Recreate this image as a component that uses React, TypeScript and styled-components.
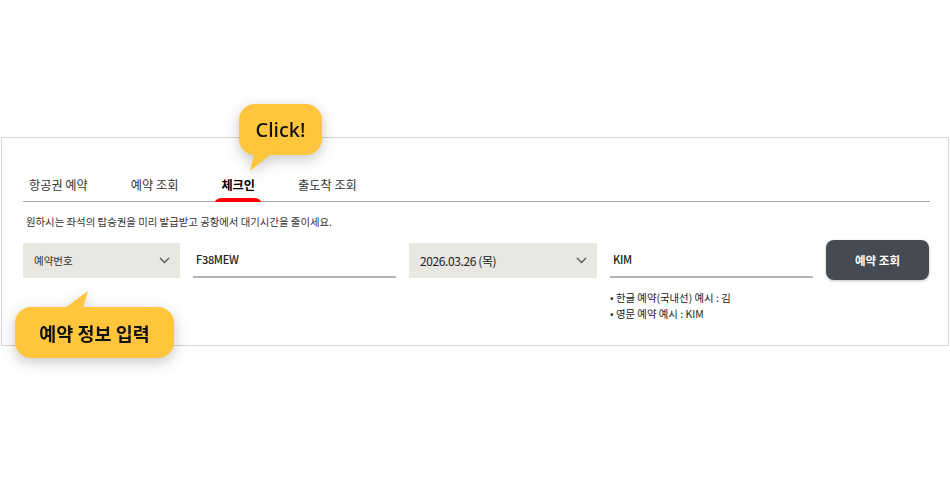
import React from 'react'
import styled, { createGlobalStyle } from 'styled-components'

const GlobalStyle = createGlobalStyle`
  html, body {
    margin: 0;
    padding: 0;
    background: #fff;
  }
  body {
    font-family: "Noto Sans CJK KR", "Noto Sans", sans-serif;
    color: #222;
  }
`

const tabs = ['항공권 예약', '예약 조회', '체크인', '출도착 조회']

const ChevronDown = () => (
  <svg width="11" height="7" viewBox="0 0 11 7" fill="none">
    <path d="M1 1l4.5 4.5L10 1" stroke="#555" strokeWidth="1.3" />
  </svg>
)

const App = () => {
  return (
    <Page>
      <GlobalStyle />
      <Panel>
        <TabBar>
          {tabs.map((t) => (
            <Tab key={t} active={t === '체크인'}>
              {t}
            </Tab>
          ))}
        </TabBar>
        <Desc>원하시는 좌석의 탑승권을 미리 발급받고 공항에서 대기시간을 줄이세요.</Desc>
        <FormGrid>
          <Select>
            <span>예약번호</span>
            <ChevronDown />
          </Select>
          <Field>F38MEW</Field>
          <Select>
            <DateText>2026.03.26 (목)</DateText>
            <ChevronDown />
          </Select>
          <Field>KIM</Field>
          <SearchButton>예약 조회</SearchButton>
          <Hints>
            <li>한글 예약(국내선) 예시 : 김</li>
            <li>영문 예약 예시 : KIM</li>
          </Hints>
        </FormGrid>
      </Panel>

      <Bubble left={239} top={104} width={83} tail="16px 46px, 37px 46px, 11px 67px">
        <BubbleText>Click!</BubbleText>
      </Bubble>
      <Bubble left={15} top={307} width={159} tail="50px 17px, 68px 17px, 73px 0px" tailTop>
        <BubbleText bold>예약 정보 입력</BubbleText>
      </Bubble>
    </Page>
  )
}

export default App

const Page = styled.div`
  position: relative;
  width: 950px;
  height: 483px;
  padding-top: 137px;
  box-sizing: border-box;
`

const Panel = styled.div`
  margin-left: 1px;
  width: 948px;
  height: 209px;
  box-sizing: border-box;
  border: 1px solid #d6d6d6;
  padding: 0 18px 0 21px;
`

const TabBar = styled.div`
  display: flex;
  gap: 31px;
  margin-top: 39px;
  border-bottom: 1px solid #a8a8a8;
`

const Tab = styled.div<{ active?: boolean }>`
  position: relative;
  padding: 0 6px 8px;
  line-height: 16px;
  font-size: 12.2px;
  font-weight: ${(p) => (p.active ? 700 : 400)};
  color: ${(p) => (p.active ? '#000' : '#333')};
  &::after {
    content: '';
    display: ${(p) => (p.active ? 'block' : 'none')};
    position: absolute;
    left: 0;
    right: 0;
    bottom: -1px;
    height: 4px;
    background: #f00;
    border-radius: 7px 7px 0 0 / 4px 4px 0 0;
  }
`

const Desc = styled.p`
  margin: 12px 0 0 3px;
  font-size: 10.4px;
  line-height: 16px;
  color: #333;
`

const FormGrid = styled.div`
  display: grid;
  grid-template-columns: 157px 203px 188px 203px 103px;
  column-gap: 13px;
  align-items: center;
  margin-top: 10px;
`

const Select = styled.div`
  height: 35px;
  background: #e8e7e2;
  display: flex;
  align-items: center;
  justify-content: space-between;
  padding: 0 10px 0 11px;
  font-size: 10.5px;
  color: #333;
`

const DateText = styled.span`
  font-size: 12px;
  color: #222;
  letter-spacing: -0.4px;
`

const Field = styled.div`
  height: 35px;
  box-sizing: border-box;
  border-bottom: 2px solid #b4b4b4;
  display: flex;
  align-items: center;
  padding: 0 3px;
  font-size: 11px;
  font-weight: 500;
  letter-spacing: -0.3px;
  color: #222;
`

const SearchButton = styled.button`
  height: 40px;
  border: 0;
  border-radius: 8px;
  background: #454a53;
  color: #fff;
  font-family: "Noto Sans CJK KR", sans-serif;
  font-size: 11.5px;
  font-weight: 700;
  box-shadow: 0 1px 3px rgba(0, 0, 0, 0.25);
`

const Hints = styled.ul`
  grid-column: 4;
  margin: 10px 0 0;
  padding: 0;
  list-style: none;
  font-size: 10.4px;
  line-height: 16px;
  color: #222;
  li::before {
    content: '• ';
  }
`

const Bubble = styled.div<{ left: number; top: number; width: number; tail: string; tailTop?: boolean }>`
  position: absolute;
  left: ${(p) => p.left}px;
  top: ${(p) => p.top}px;
  width: ${(p) => p.width}px;
  height: 51px;
  filter: drop-shadow(0 4px 7px rgba(0, 0, 0, 0.22));
  &::before {
    content: '';
    position: absolute;
    inset: 0;
    background: #ffc53d;
    border-radius: 16px;
  }
  &::after {
    content: '';
    position: absolute;
    left: 0;
    top: ${(p) => (p.tailTop ? '-16px' : '0')};
    width: 100px;
    height: 70px;
    background: #ffc53d;
    clip-path: polygon(${(p) => p.tail});
  }
`

const BubbleText = styled.div<{ bold?: boolean }>`
  position: relative;
  z-index: 1;
  height: 100%;
  display: flex;
  align-items: center;
  justify-content: center;
  font-family: ${(p) => (p.bold ? '"Noto Sans CJK KR", sans-serif' : '"Noto Sans", sans-serif')};
  font-size: ${(p) => (p.bold ? '18.5px' : '20px')};
  font-weight: ${(p) => (p.bold ? 700 : 500)};
  color: #111;
`
